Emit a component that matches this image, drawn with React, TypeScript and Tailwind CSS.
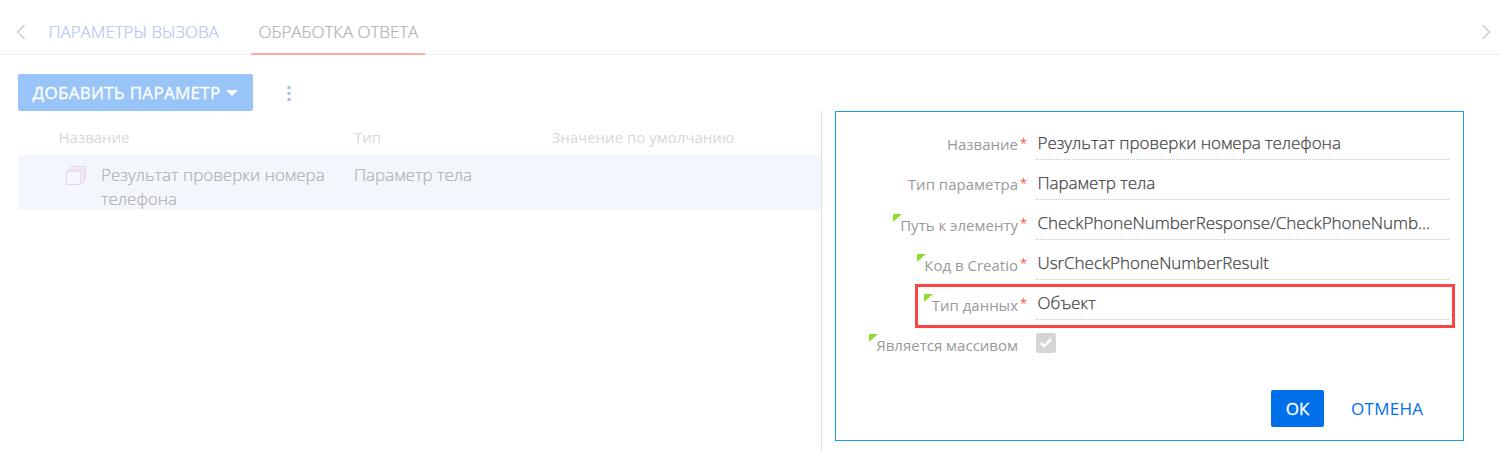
import React from "react";

type Field = { label: string; value: string; marked?: boolean; highlighted?: boolean };

const fields: Field[] = [
  { label: "Название", value: "Результат проверки номера телефона" },
  { label: "Тип параметра", value: "Параметр тела" },
  { label: "Путь к элементу", value: "CheckPhoneNumberResponse/CheckPhoneNumb...", marked: true },
  { label: "Код в Creatio", value: "UsrCheckPhoneNumberResult", marked: true },
  { label: "Тип данных", value: "Объект", marked: true, highlighted: true },
];

function Marker() {
  return (
    <svg className="absolute top-0 -left-[7.6px]" width="9" height="8" viewBox="0 0 9 8">
      <path d="M0 0H9L0 8Z" fill="#8fdd2f" />
    </svg>
  );
}

function Label({ text, marked }: { text: string; marked?: boolean }) {
  return (
    <div className="flex w-[182px] shrink-0 justify-end">
      <div className={marked ? "relative pt-[1px]" : "relative"}>
        {marked && <Marker />}
        <span className="block text-[15px] leading-[21px] text-[#999]">{text}</span>
      </div>
    </div>
  );
}

function FieldRow({ label, value, marked, highlighted }: Field) {
  return (
    <div className="relative flex h-10">
      {highlighted && (
        <div className="absolute top-[4px] left-[79px] h-[44px] w-[540px] border-[3px] border-[#fc4445]" />
      )}
      <div className="flex pt-[14px]">
        <Label text={label} marked={marked} />
      </div>
      <span className="w-[18px] shrink-0 pt-[13px] pl-[2px] text-[13px] leading-[21px] text-[#f4503c]">*</span>
      <div className="h-10 w-[413px] border-b border-dotted border-[#c4c4c4] pt-[11px] pl-[1.5px] text-[17px] leading-6 font-light tracking-[-0.05px] text-[#444] [-webkit-text-stroke:0.25px_#444]">
        {value}
      </div>
    </div>
  );
}

function Chevron({ flip }: { flip?: boolean }) {
  return (
    <svg className={flip ? "rotate-180" : ""} width="10" height="16" viewBox="0 0 10 16" fill="none">
      <path d="M8.5 1L1.5 8L8.5 15" stroke="#cfcfcf" strokeWidth="1.6" />
    </svg>
  );
}

function StackIcon() {
  return (
    <svg width="21" height="20" viewBox="0 0 21 20" fill="none" stroke="#e6d5ee">
      <path d="M5.5 2.5V0.5H19.5V13.5H17.5" fill="#f3ecf9" />
      <path d="M2.5 5.5V3.5H17.5V16.5H14.5" fill="#f3ecf9" />
      <rect x="0.5" y="5.5" width="14" height="13" fill="#f5f7fd" />
    </svg>
  );
}

export default function App() {
  return (
    <div className="flex h-[451px] w-[1501px] flex-col overflow-hidden bg-white font-['Open_Sans',sans-serif] whitespace-nowrap">
      <header className="flex h-[55px] shrink-0 border-b border-[#f0f0f0] pl-4">
        <div className="pt-[24px]"><Chevron /></div>
        <nav className="flex flex-1 pl-[15px] text-[17px] font-light tracking-[-0.06px]">
          <div className="h-[55px] w-[210px] pt-[20px] pl-[7.5px] leading-6 text-[#b4c5ee] [-webkit-text-stroke:0.2px_#b4c5ee]">ПАРАМЕТРЫ ВЫЗОВА</div>
          <div className="h-[55px] w-[174px] border-b-2 border-[#ffada2] pt-[20px] pl-[7.5px] leading-6 text-[#b0b0b0] [-webkit-text-stroke:0.2px_#b0b0b0]">ОБРАБОТКА ОТВЕТА</div>
        </nav>
        <div className="pt-[24px] pr-[10px]"><Chevron flip /></div>
      </header>

      <div className="flex h-14 shrink-0 items-start pt-[19px] pl-[18px]">
        <button className="flex h-[37px] w-[235px] items-center rounded-[2px] bg-[#99c4f7] pl-[14.5px] text-[17px] text-white">
          <span className="tracking-[0.3px] [-webkit-text-stroke:0.3px_white]">ДОБАВИТЬ ПАРАМЕТР</span>
          <svg className="ml-[5.5px]" width="12" height="6" viewBox="0 0 12 6"><path d="M0 0H12L6 6Z" fill="white" /></svg>
        </button>
        <svg className="mt-[12px] ml-[34px]" width="4" height="16" viewBox="0 0 4 16" fill="#adbde6">
          <rect x="0.5" y="0" width="3" height="3" />
          <rect x="0.5" y="6" width="3" height="3" />
          <rect x="0.5" y="12" width="3" height="3" />
        </svg>
      </div>

      <main className="flex min-h-0 flex-1">
        <section className="w-[822px] border-r border-[#dedede] pl-[18px]">
          <div className="flex h-11 items-start pt-[16px] text-[15px] leading-[21px] text-[#d8d8d8]">
            <div className="w-[296px] pl-[40.5px]">Название</div>
            <div className="w-[197px] pl-[40px]">Тип</div>
            <div className="pl-[40.5px]">Значение по умолчанию</div>
          </div>
          <div className="flex h-[55px] bg-[#f3f7fd] pt-[8px] text-[17px] leading-6 font-light tracking-[-0.03px] text-[#b0b0b0] [-webkit-text-stroke:0.2px_#b0b0b0]">
            <div className="pt-[3px] pl-[48px]"><StackIcon /></div>
            <div className="w-[267px] pl-[14px]">Результат проверки номера<br />телефона</div>
            <div>Параметр тела</div>
          </div>
        </section>

        <section className="ml-[13px] h-[330px] w-[629px] border border-[#14a2e4] pt-[8px]">
          {fields.map((f) => <FieldRow key={f.label} {...f} />)}
          <div className="flex h-10 pt-[14px]">
            <Label text="Является массивом" marked />
            <div className="-mt-px ml-[18px] flex size-5 items-center justify-center rounded-[3px] bg-[#d5d5d5]">
              <svg width="12" height="10" viewBox="0 0 12 10" fill="none"><path d="M1 5L4.2 8L11 1.2" stroke="white" strokeWidth="2.4" /></svg>
            </div>
          </div>
          <div className="flex items-center pt-[30px] pl-[435px] text-[17px]">
            <button className="h-[37px] w-[53px] rounded-[2px] bg-[#006fea] text-white [-webkit-text-stroke:0.3px_white]">ОК</button>
            <button className="ml-[27px] h-[37px] tracking-[0.3px] text-[#0070ea]">ОТМЕНА</button>
          </div>
        </section>
      </main>
    </div>
  );
}
